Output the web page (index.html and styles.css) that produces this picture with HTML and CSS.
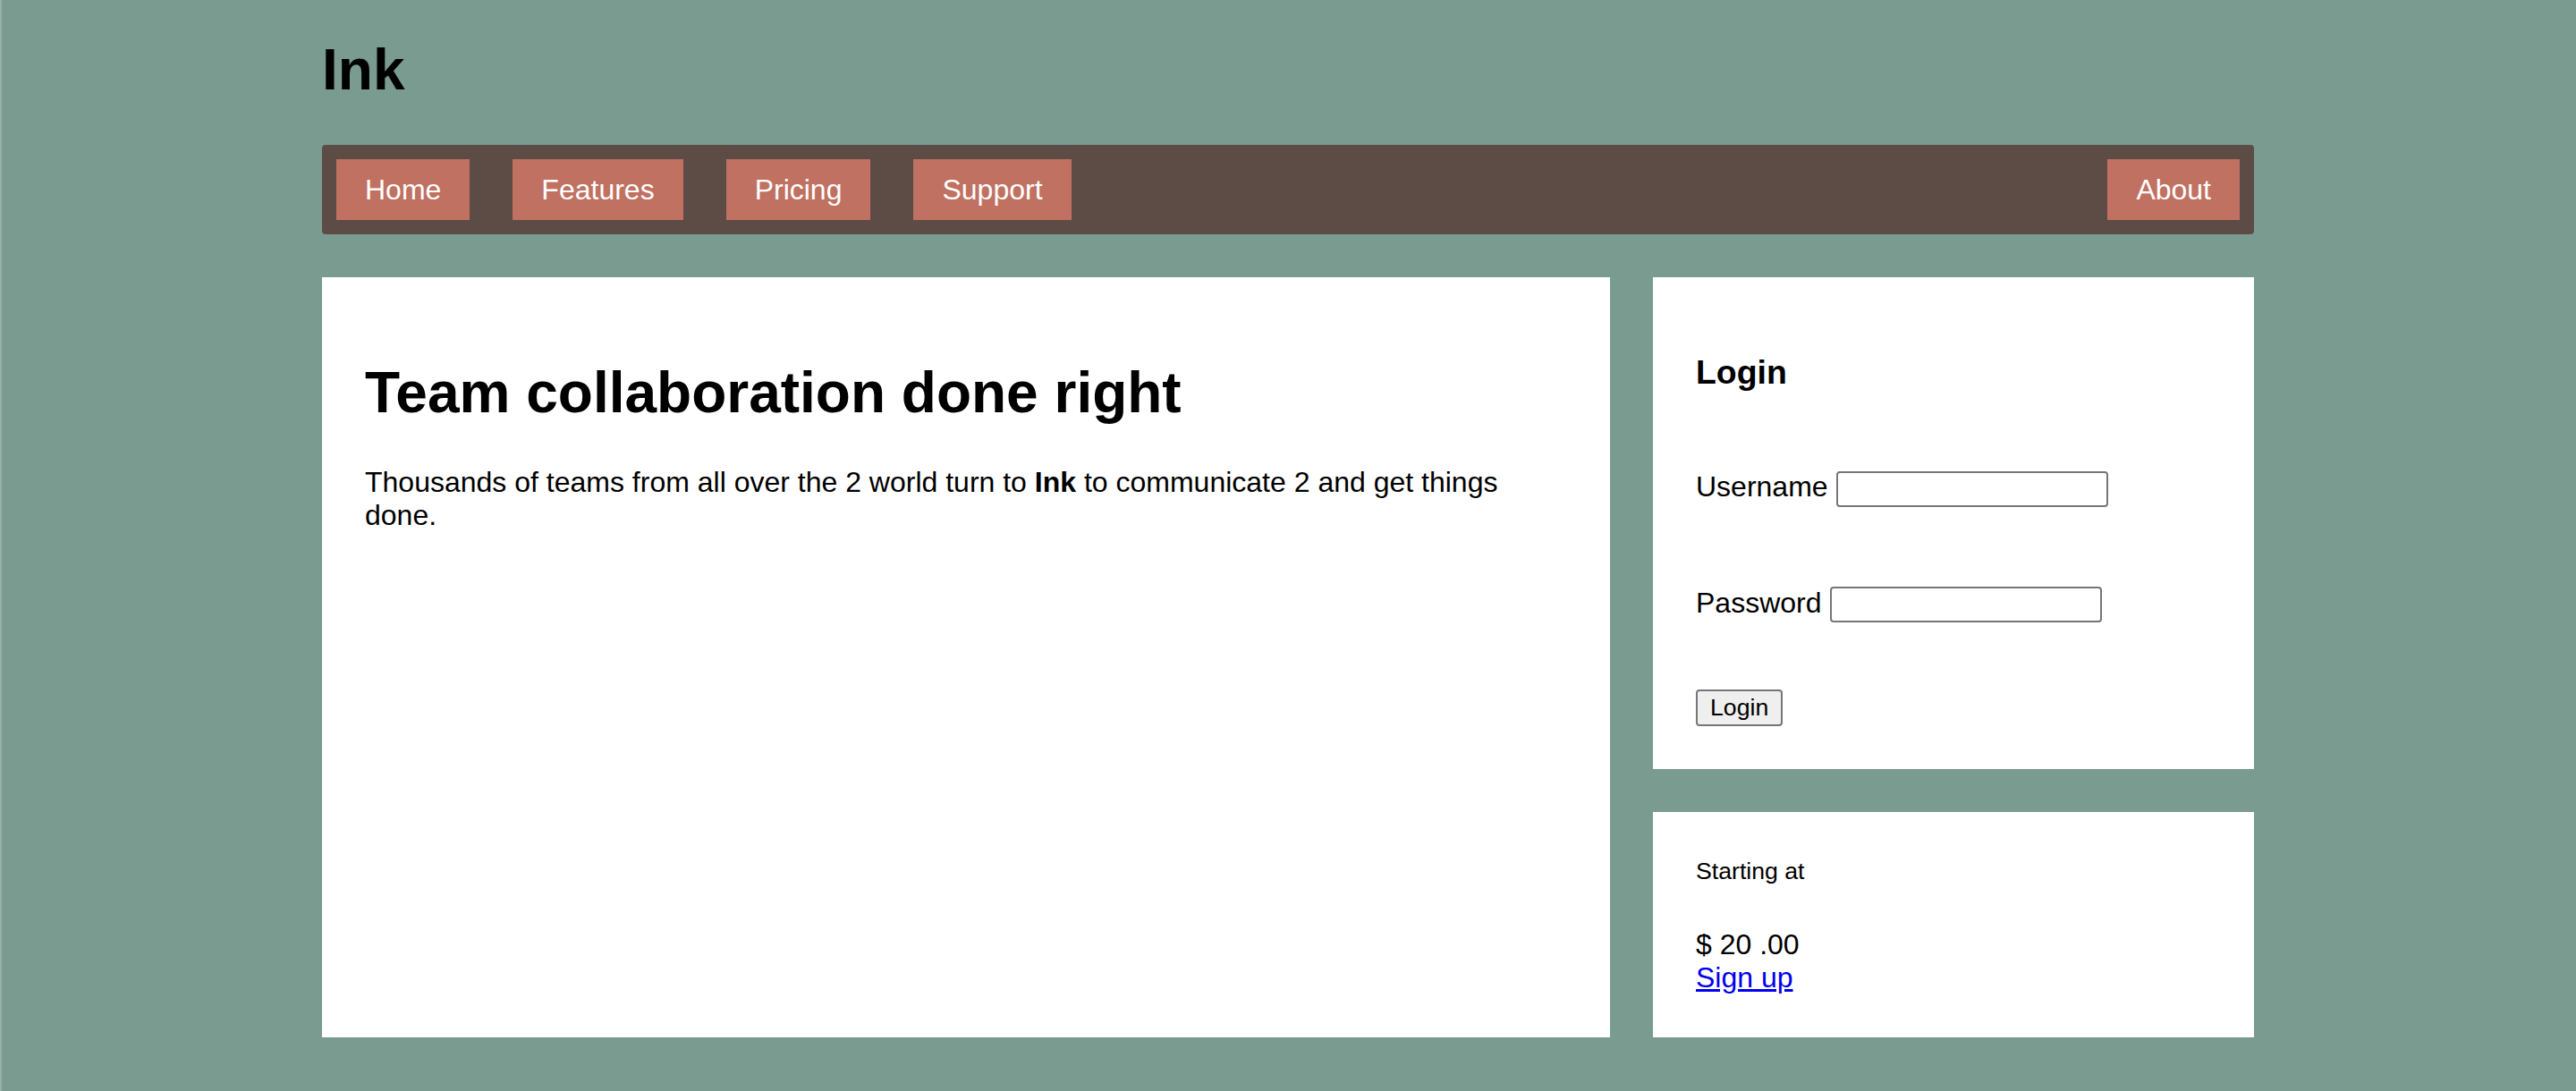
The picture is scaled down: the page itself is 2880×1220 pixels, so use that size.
FILE: index.html
```html
<!DOCTYPE html>
<html lang="en">
<head>
<meta charset="utf-8">
<title>Ink</title>
<link rel="stylesheet" href="styles.css">
</head>
<body>
<div class="page">
  <h1 class="brand">Ink</h1>
  <nav class="nav">
    <a class="nav-item" href="#">Home</a>
    <a class="nav-item" href="#">Features</a>
    <a class="nav-item" href="#">Pricing</a>
    <a class="nav-item" href="#">Support</a>
    <a class="nav-item nav-right" href="#">About</a>
  </nav>
  <div class="main">
    <section class="panel hero">
      <h2 class="hero-title">Team collaboration done right</h2>
      <p class="hero-text">Thousands of teams from all over the 2 world turn to <b>Ink</b> to communicate 2 and get things done.</p>
    </section>
    <aside class="side">
      <div class="panel login">
        <h3 class="login-title">Login</h3>
        <div class="field field-user"><label>Username</label> <input class="input" type="text"></div>
        <div class="field field-pass"><label>Password</label> <input class="input" type="password"></div>
        <div class="actions"><button class="btn">Login</button></div>
      </div>
      <div class="panel pricing">
        <div class="price-label">Starting at</div>
        <div class="price">$ 20 .00</div>
        <a class="signup" href="#">Sign up</a>
      </div>
    </aside>
  </div>
</div>
</body>
</html>
```

FILE: styles.css
```css
html, body {
  margin: 0;
  padding: 0;
}
body {
  background: linear-gradient(to right, #97b0a8 0, #97b0a8 2px, #7a9b90 2px);
  min-height: 1220px;
  font-family: "Liberation Sans", Arial, Helvetica, sans-serif;
  font-size: 32px;
  color: #000;
}
.page {
  width: 2160px;
  margin: 0 auto;
}
.brand {
  font-size: 64px;
  font-weight: bold;
  margin: 42px 0 46px;
  line-height: 1.15;
}
.nav {
  display: flex;
  gap: 48px;
  padding: 16px;
  background: #5d4c45;
  border-radius: 4px;
}
.nav-item {
  display: block;
  padding: 16px 32px;
  background: #c07161;
  color: #fff;
  text-decoration: none;
  font-size: 32px;
  line-height: 1.15;
}
.nav-right {
  margin-left: auto;
}
.main {
  display: flex;
  margin-top: 48px;
  align-items: stretch;
}
.panel {
  background: #fff;
  padding: 48px;
  box-sizing: border-box;
}
.hero {
  width: 1440px;
  flex: none;
}
.hero-title {
  font-size: 64px;
  line-height: 1.15;
  margin: 45px 0 44px;
}
.hero-text {
  margin: 0;
  line-height: 1.15;
}
.side {
  flex: 1;
  margin-left: 48px;
  display: flex;
  flex-direction: column;
  gap: 48px;
}
.login {
  display: flex;
  flex-direction: column;
  align-items: flex-start;
}
.login-title {
  font-size: 37.44px;
  line-height: 1.15;
  margin: 37px 0 0;
}
.field {
  display: flex;
  align-items: baseline;
  gap: 9px;
  line-height: 1.15;
}
.field-user {
  margin-top: 88px;
}
.field-pass {
  margin-top: 89px;
}
.input {
  box-sizing: border-box;
  width: 304px;
  height: 40px;
  border: 2px solid #767676;
  border-radius: 4px;
  padding: 2px 4px;
  font-family: "Liberation Sans", Arial, sans-serif;
  font-size: 26.67px;
  background: #fff;
}
.actions {
  margin-top: 75px;
}
.btn {
  box-sizing: border-box;
  height: 41px;
  padding: 0 14px;
  border: 2px solid #767676;
  border-radius: 4px;
  background: #efefef;
  font-family: "Liberation Sans", Arial, sans-serif;
  font-size: 26.67px;
  color: #000;
}
.pricing {
  line-height: 1.15;
}
.price-label {
  font-size: 26.67px;
  margin: 3px 0 48px;
}
.price {
  font-size: 32px;
}
.signup {
  color: #0000ee;
  text-decoration: underline;
  font-size: 32px;
}
```
